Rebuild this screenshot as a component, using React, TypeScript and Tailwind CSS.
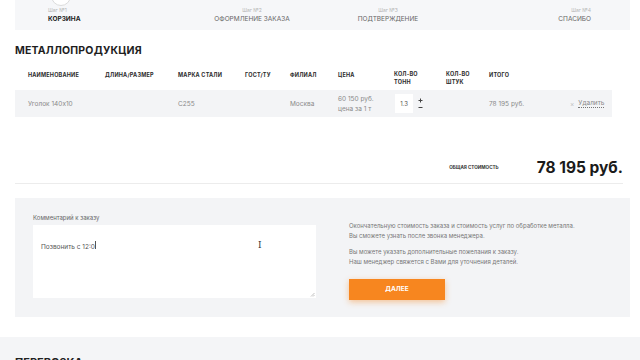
import React from "react";

const F = { fontFamily: "Inter, 'Open Sans', sans-serif" };

export default function App() {
  const th = "text-[5.5px] font-bold uppercase text-[#2b2b2b] leading-[8px] tracking-[0.2px]";
  const td = "text-[6.5px] text-[#8a8a8a] leading-[10px]";
  return (
    <div className="w-[640px] h-[360px] overflow-hidden bg-white relative" style={F}>
      {/* Steps */}
      <div className="mx-[15px] w-[615px] h-[30px] bg-[#f6f7f9] relative">
        <div className="absolute left-[36px] top-[-14px] w-[20px] h-[20px] rounded-full border border-[#dcdcdc] bg-white" />
        <div className="flex h-full pt-[6px]">
          <div className="ml-[33px] w-[80px]">
            <div className="text-[5px] text-[#b5b5b5] leading-[8px]">Шаг №1</div>
            <div className="text-[6.5px] font-bold text-[#222] leading-[10px]">КОРЗИНА</div>
          </div>
          <div className="ml-[84px] w-[80px] text-center">
            <div className="text-[5px] text-[#b5b5b5] leading-[8px]">Шаг №2</div>
            <div className="text-[6.5px] text-[#666] leading-[10px]">ОФОРМЛЕНИЕ ЗАКАЗА</div>
          </div>
          <div className="ml-[56px] w-[80px] text-center">
            <div className="text-[5px] text-[#b5b5b5] leading-[8px]">Шаг №3</div>
            <div className="text-[6.5px] text-[#666] leading-[10px]">ПОДТВЕРЖДЕНИЕ</div>
          </div>
          <div className="flex-1 text-right pr-[39px]">
            <div className="text-[5px] text-[#b5b5b5] leading-[8px]">Шаг №4</div>
            <div className="text-[6.5px] text-[#666] leading-[10px]">СПАСИБО</div>
          </div>
        </div>
      </div>

      {/* Title */}
      <div className="mx-[15px] pt-[14px] h-[36px]">
        <div className="text-[10.5px] font-bold text-[#1e1e1e] leading-[14px] tracking-[0.2px]">МЕТАЛЛОПРОДУКЦИЯ</div>
      </div>

      {/* Table header */}
      <div className="mx-[15px] w-[597px] h-[24px] flex items-start pt-[4px] pl-[13px]">
        <div className={`${th} w-[77px] pt-[1px]`}>Наименование</div>
        <div className={`${th} w-[73px] pt-[1px]`}>Длина/Размер</div>
        <div className={`${th} w-[67px] pt-[1px]`}>Марка стали</div>
        <div className={`${th} w-[45px] pt-[1px]`}>Гост/ту</div>
        <div className={`${th} w-[48px] pt-[1px]`}>Филиал</div>
        <div className={`${th} w-[56px] pt-[1px]`}>Цена</div>
        <div className={`${th} w-[52px]`}>Кол-во<br />тонн</div>
        <div className={`${th} w-[43px]`}>Кол-во<br />штук</div>
        <div className={`${th} pt-[1px]`}>Итого</div>
      </div>

      {/* Row */}
      <div className="mx-[15px] w-[597px] h-[27px] bg-[#f3f4f6] flex items-center pl-[13px]">
        <div className={`${td} w-[150px]`}>Уголок 140х10</div>
        <div className={`${td} w-[112px]`}>С255</div>
        <div className={`${td} w-[48px]`}>Москва</div>
        <div className={`${td} w-[57px] leading-[10px]`}>60 150 руб.<br />цена за 1 т</div>
        <div className="w-[94px] flex items-center">
          <div className="w-[18px] h-[19px] bg-white flex items-center justify-center text-[6px] text-[#555]">1.3</div>
          <div className="ml-[5px] flex flex-col items-center gap-[2px]">
            <svg width="5" height="5" viewBox="0 0 5 5">
              <path d="M2.5 0.5 V4.5 M0.5 2.5 H4.5" stroke="#444" strokeWidth="1" />
            </svg>
            <svg width="5" height="5" viewBox="0 0 5 5">
              <path d="M0.5 2.5 H4.5" stroke="#444" strokeWidth="1" />
            </svg>
          </div>
        </div>
        <div className={`${td} w-[81px]`}>78 195 руб.</div>
        <div className={`${td} flex items-center gap-[4px]`}>
          <span className="text-[#c0c0c0]">×</span>
          <span className="border-b border-dotted border-[#777] leading-[8px]">Удалить</span>
        </div>
      </div>

      {/* Total */}
      <div className="mx-[15px] w-[608px] h-[67px] flex items-end justify-end pb-[4px] border-b border-[#ececec]">
        <div className="text-[4.6px] font-bold text-[#333] uppercase mr-[38px] mb-[7px]">Общая стоимость</div>
        <div className="text-[15.5px] font-bold text-[#1a1a1a] leading-[22px]">78 195 руб.</div>
      </div>

      {/* Comment panel */}
      <div className="mx-[15px] mt-[14px] w-[615px] h-[119px] bg-[#f3f4f6] flex pl-[18px] pt-[15px]">
        <div className="w-[283px]">
          <div className="text-[6px] text-[#666] leading-[9px]">Комментарий к заказу</div>
          <div className="mt-[3px] h-[73px] bg-white relative pl-[8px] pt-[6px]">
            <span className="text-[6.5px] text-[#555]">Позвонить с 12:0</span>
            <span className="inline-block w-[1px] h-[8px] bg-[#555] align-middle" />
            <span className="absolute left-[225px] top-[14px] text-[9px] text-[#333] font-light" style={{ fontFamily: "'DejaVu Serif', serif" }}>I</span>
            <svg className="absolute right-[1px] bottom-[1px]" width="5" height="5" viewBox="0 0 5 5">
              <path d="M4.5 1 L1 4.5 M4.5 3 L3 4.5" stroke="#999" strokeWidth="0.6" />
            </svg>
          </div>
        </div>
        <div className="ml-[33px] pt-[8px]">
          <div className="text-[6px] text-[#777] leading-[10px]">
            Окончательную стоимость заказа и стоимость услуг по обработке металла.<br />
            Вы сможете узнать после звонка менеджера.
          </div>
          <div className="mt-[6px] text-[6px] text-[#777] leading-[10px]">
            Вы можете указать дополнительные пожелания к заказу.<br />
            Наш менеджер свяжется с Вами для уточнения деталей.
          </div>
          <div className="mt-[12px] w-[96px] h-[21px] bg-[#f7861f] flex items-center justify-center text-[6.5px] font-bold text-white shadow-[0_2px_6px_rgba(247,134,31,0.45)]">
            ДАЛЕЕ
          </div>
        </div>
      </div>

      {/* Bottom section */}
      <div className="mt-[20px] h-[30px] bg-[#f4f5f7] pl-[15px] pt-[18px]">
        <div className="text-[11px] font-bold text-[#222] leading-[14px]">ПЕРЕВОЗКА</div>
      </div>
    </div>
  );
}
